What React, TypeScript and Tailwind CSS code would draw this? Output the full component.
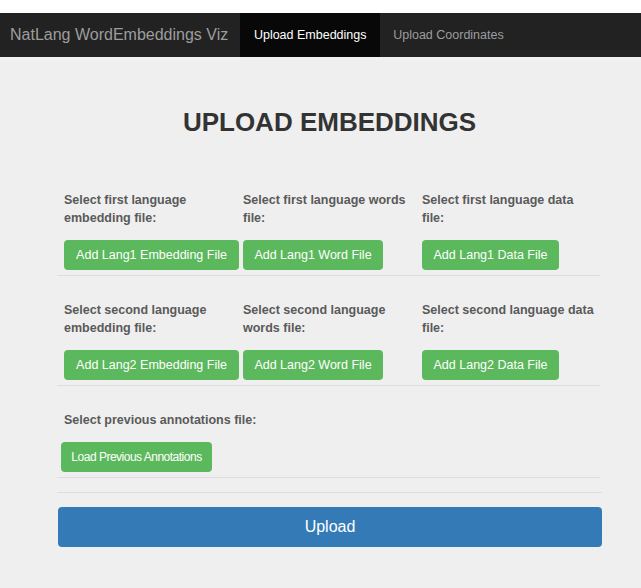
import React from "react";

type Field = { label: string; button: string; width: string };

const rows: Field[][] = [
  [
    { label: "Select first language embedding file:", button: "Add Lang1 Embedding File", width: "w-[175px]" },
    { label: "Select first language words file:", button: "Add Lang1 Word File", width: "w-[140px]" },
    { label: "Select first language data file:", button: "Add Lang1 Data File", width: "w-[137px]" },
  ],
  [
    { label: "Select second language embedding file:", button: "Add Lang2 Embedding File", width: "w-[175px]" },
    { label: "Select second language words file:", button: "Add Lang2 Word File", width: "w-[140px]" },
    { label: "Select second language data file:", button: "Add Lang2 Data File", width: "w-[137px]" },
  ],
];

function FileButton({ text, width, tight }: { text: string; width: string; tight?: boolean }) {
  return (
    <button
      type="button"
      className={`${width} h-[30px] rounded-[4px] bg-[#5cb85c] ${tight ? "text-[12px] tracking-[-0.5px]" : "text-[12.5px]"} text-white whitespace-nowrap`}
    >
      {text}
    </button>
  );
}

export default function App() {
  return (
    <div className="min-h-[588px] bg-[#efefef] font-['Liberation_Sans',Arial,sans-serif]">
      <div className="h-[13px] bg-white" />
      <nav className="flex h-[44px] items-stretch bg-[#222222]">
        <span className="flex items-center pl-[10px] pr-[12px] text-[16px] text-[#9d9d9d]">
          NatLang WordEmbeddings Viz
        </span>
        <span className="flex w-[140px] items-center justify-center bg-[#080808] text-[12.5px] text-white">
          Upload Embeddings
        </span>
        <span className="flex items-center pl-[13px] text-[12.5px] text-[#9d9d9d]">
          Upload Coordinates
        </span>
      </nav>

      <div className="ml-[57px] w-[545px]">
        <h1 className="pt-[50px] pb-[54px] text-center text-[26px] font-bold leading-[30px] text-[#333333]">
          UPLOAD EMBEDDINGS
        </h1>

        {rows.map((row, i) => (
          <div key={i} className="mb-[25px] mr-[2px] border-b border-[#dddddd] pb-[5px] pl-[7px]">
            <div className="grid grid-cols-[179px_179px_179px]">
              {row.map((f) => (
                <div key={f.button} className="flex flex-col">
                  <label className="mb-[13px] h-[36px] pr-[4px] text-[12.5px] font-bold leading-[18px] text-[#5a5a5a]">
                    {f.label}
                  </label>
                  <FileButton text={f.button} width={f.width} />
                </div>
              ))}
            </div>
          </div>
        ))}

        <div className="mr-[2px] border-b border-[#dddddd] pb-[5px] pl-[4px]">
          <label className="block pl-[3px] text-[12.5px] font-bold leading-[18px] text-[#5a5a5a]">
            Select previous annotations file:
          </label>
          <div className="mt-[13px]">
            <FileButton text="Load Previous Annotations" width="w-[151px]" tight />
          </div>
        </div>

        <div className="mt-[14px] border-t border-[#dddddd] pt-[14px]">
          <button
            type="button"
            className="ml-[1px] h-[40px] w-[544px] rounded-[4px] bg-[#337ab7] text-[16px] text-white"
          >
            Upload
          </button>
        </div>
      </div>
    </div>
  );
}
